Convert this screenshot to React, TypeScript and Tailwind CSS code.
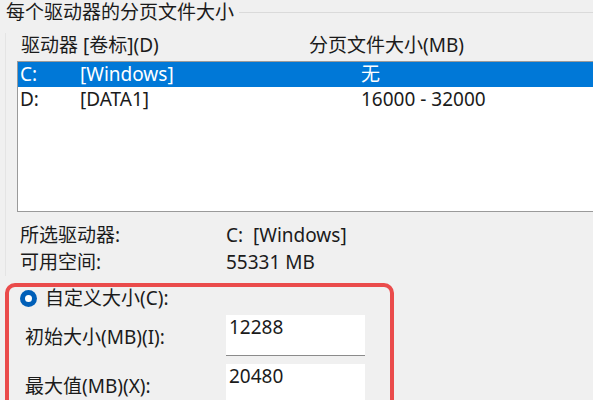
const font = { fontFamily: "'Noto Sans', 'Noto Sans CJK SC', sans-serif" };

function Radio() {
  return (
    <span className="flex h-[17px] w-[17px] items-center justify-center rounded-full bg-[#005fb8]">
      <span className="h-[7px] w-[7px] rounded-full bg-white" />
    </span>
  );
}

function SizeField({ label, value }: { label: string; value: string }) {
  return (
    <div className="flex items-center">
      <div className="w-[217px] pl-[16px] pt-[2px] leading-[24px]">{label}</div>
      <div className="h-[41px] w-[139px] border-b border-[#8b8b8b] bg-white pl-[3px] leading-[24px]">
        {value}
      </div>
    </div>
  );
}

export default function App() {
  return (
    <div
      className="relative h-[400px] w-[593px] overflow-hidden bg-[#f0f0f0] text-[19px] text-[#1b1b1b]"
      style={font}
    >
      {/* group box title */}
      <div className="flex items-center pt-[1px]">
        <div className="pl-[6px] leading-[22px]">每个驱动器的分页文件大小</div>
        <div className="ml-[5px] h-px flex-1 bg-[#dadada]" />
      </div>

      <div className="ml-[5px] border-l border-[#e4e4e4]">
        {/* column headers */}
        <div className="mt-[10px] flex leading-[25px]">
          <div className="w-[303px] pl-[15px]">驱动器 [卷标](D)</div>
          <div>分页文件大小(MB)</div>
        </div>

        {/* drive list */}
        <div className="ml-[11px] mt-[3px] h-[151px] w-[600px] border border-[#9a9a9a] bg-white">
          <div className="flex h-[25px] items-center bg-[#0078d7] text-white">
            <span className="w-[62px] pl-[2px]">C:</span>
            <span className="w-[281px]">[Windows]</span>
            <span>无</span>
          </div>
          <div className="flex h-[25px] items-center">
            <span className="w-[62px] pl-[2px]">D:</span>
            <span className="w-[281px]">[DATA1]</span>
            <span>16000 - 32000</span>
          </div>
        </div>

        {/* selected drive info */}
        <div className="mt-[10px] leading-[27px]">
          <div className="flex">
            <span className="w-[220px] pl-[14px]">所选驱动器:</span>
            <span>C:&nbsp;&nbsp;[Windows]</span>
          </div>
          <div className="flex">
            <span className="w-[220px] pl-[14px]">可用空间:</span>
            <span>55331 MB</span>
          </div>
        </div>
      </div>

      {/* highlighted custom size section */}
      <div className="absolute left-[5px] top-[283px] h-[140px] w-[389px] rounded-[10px] border-[4px] border-[#ea4b4b]">
        <div className="flex h-[22px] items-center gap-[8px] pl-[11px]">
          <Radio />
          <span className="leading-[22px]">自定义大小(C):</span>
        </div>
        <div className="mt-[6px] flex flex-col gap-[8px]">
          <SizeField label="初始大小(MB)(I):" value="12288" />
          <SizeField label="最大值(MB)(X):" value="20480" />
        </div>
      </div>
    </div>
  );
}
